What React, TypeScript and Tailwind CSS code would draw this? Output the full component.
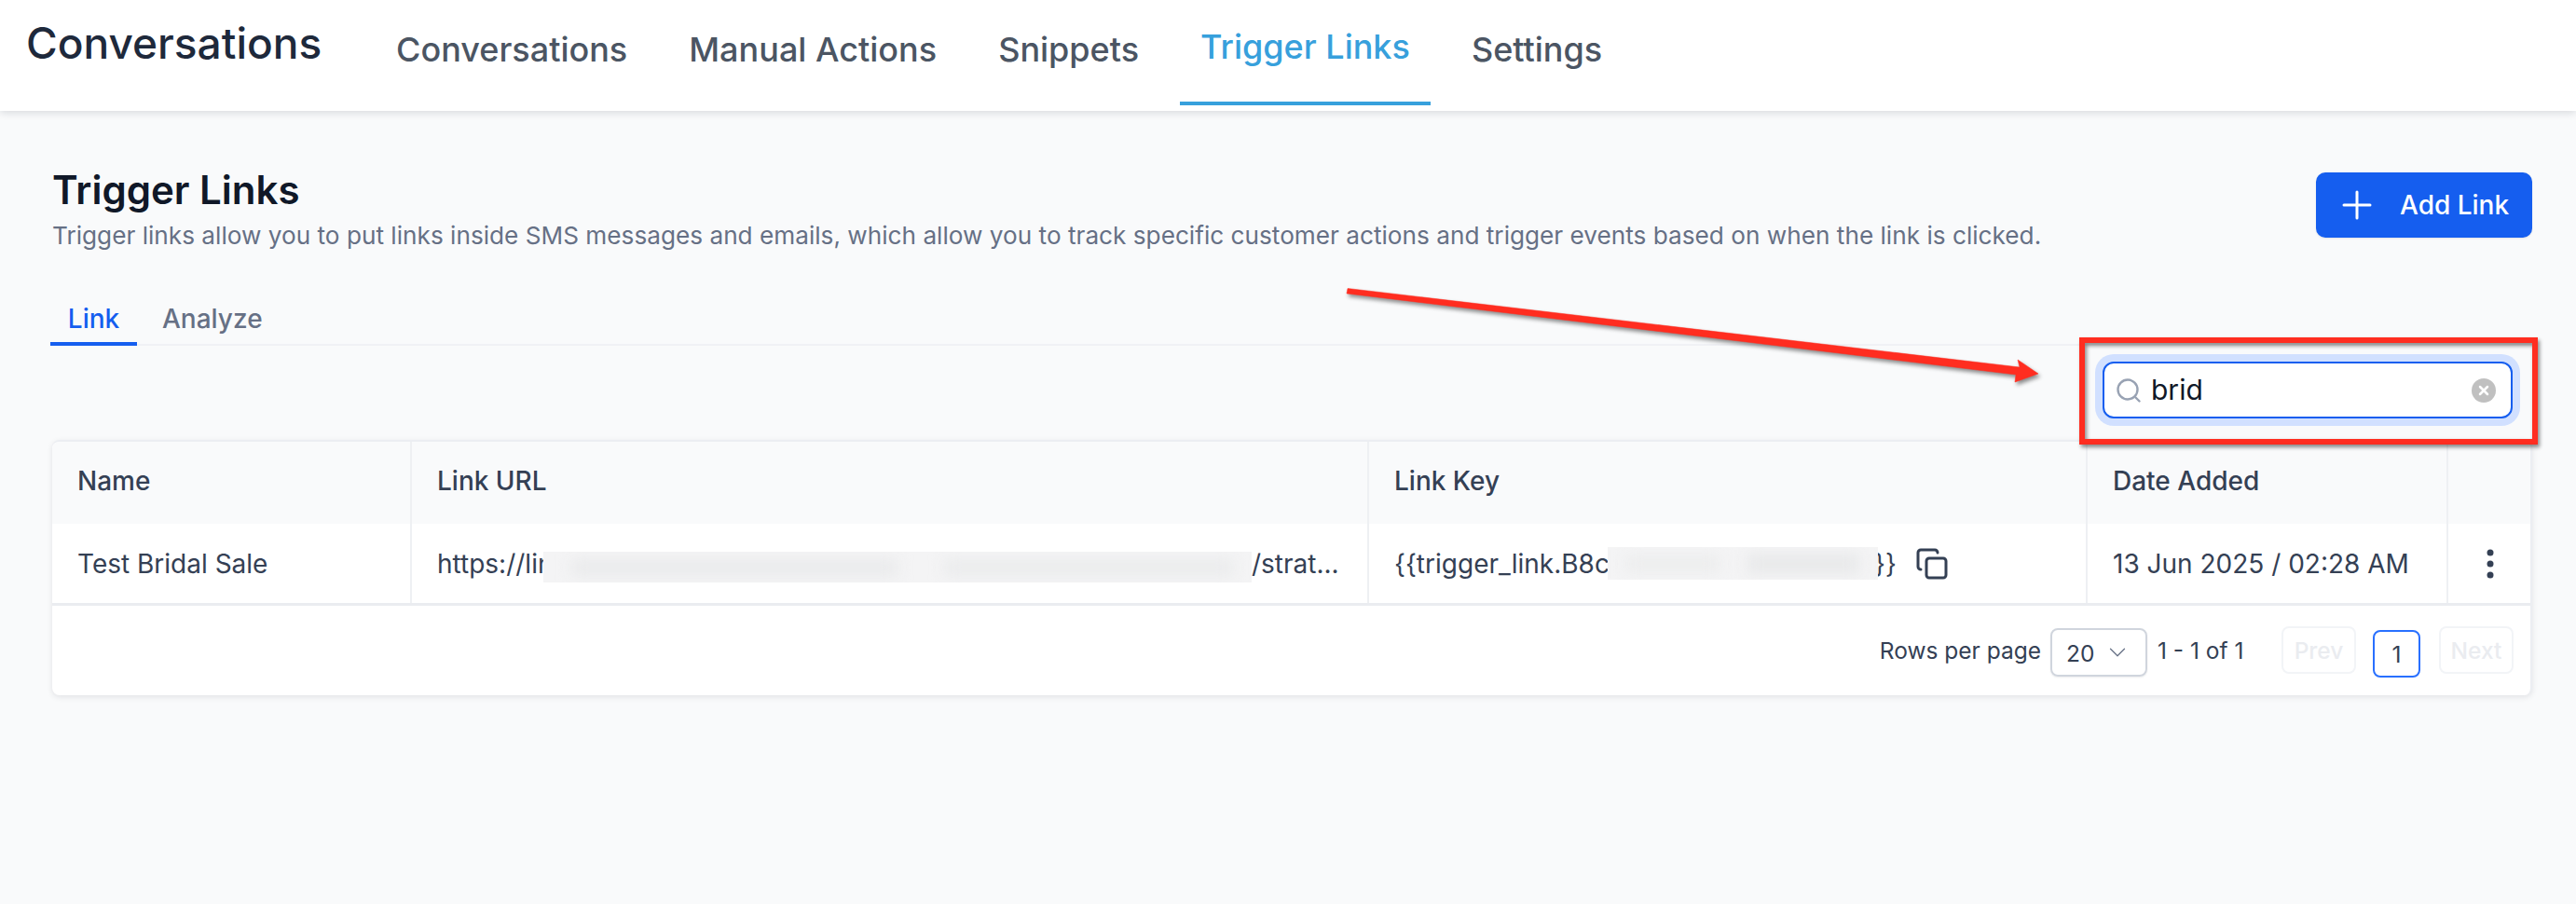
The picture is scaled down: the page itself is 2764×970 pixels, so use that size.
import { Copy, Plus, ChevronDown } from "lucide-react";

const navItems = ["Conversations", "Manual Actions", "Snippets", "Trigger Links", "Settings"];

function TopBar() {
    return (
        <header className="h-[119px] bg-white shadow-[0_2px_8px_rgba(16,24,40,0.14)] flex relative">
            <h1 className="ml-[28px] mt-[21px] w-[375px] pb-[1px] text-[46px] leading-[50px] font-medium text-[#1e293b]">
                Conversations
            </h1>
            <nav className="flex h-[113px] gap-[22px]">
                {navItems.map((item) =>
                    item === "Trigger Links" ? (
                        <a
                            key={item}
                            className="px-[22px] pt-[25px] h-full border-b-4 border-[#37a0dc] text-[36px] leading-[50px] font-medium text-[#37a0dc]"
                        >
                            {item}
                        </a>
                    ) : (
                        <a
                            key={item}
                            className="px-[22px] pt-[28px] h-full text-[36px] leading-[50px] font-medium text-[#4b5563]"
                        >
                            {item}
                        </a>
                    )
                )}
            </nav>
        </header>
    );
}

function Blurred({ className, spots }: { className: string; spots: string[] }) {
    return (
        <span className={`${className} relative bg-[#f4f4f5] overflow-hidden flex items-center shrink-0`}>
            {spots.map((c, i) => (
                <span key={i} className={c} />
            ))}
        </span>
    );
}

function HeaderCell({ label }: { label: string }) {
    return <div className="px-[27px] pb-[4px] flex items-center border-r-2 border-[#eef0f3]">{label}</div>;
}

function LinksTable() {
    return (
        <div className="bg-white rounded-[8px] border-t-2 border-r-2 border-[#eceef2] shadow-[0_2px_6px_rgba(16,24,40,0.1)] text-[28px] leading-[40px] text-[#344054]">
            <div className="grid grid-cols-[386px_1027px_771px_387px_1fr] h-[88px] bg-[#f9fafb] font-medium rounded-t-[8px]">
                <HeaderCell label="Name" />
                <HeaderCell label="Link URL" />
                <HeaderCell label="Link Key" />
                <HeaderCell label="Date Added" />
                <div />
            </div>
            <div className="grid grid-cols-[386px_1027px_771px_387px_1fr] h-[88px] border-b-[3px] border-[#eaecf0]">
                <div className="px-[27px] flex items-center border-r-2 border-[#eef0f3]">Test Bridal Sale</div>
                <div className="pl-[27px] flex items-center border-r-2 border-[#eef0f3] whitespace-nowrap">
                    <span className="w-[114px] shrink-0">https://lin</span>
                    <Blurred
                        className="w-[760px] h-[33px] translate-y-[4px]"
                        spots={[
                            "ml-[30px] w-[350px] h-[16px] shrink-0 bg-[#e8e9ea] blur-[8px]",
                            "ml-[50px] w-[310px] h-[16px] shrink-0 bg-[#e9eaeb] blur-[8px]",
                        ]}
                    />
                    <span>/strat...</span>
                </div>
                <div className="pl-[27px] flex items-center border-r-2 border-[#eef0f3] whitespace-nowrap">
                    <span className="w-[229px] shrink-0">{"{{trigger_link.B8c"}</span>
                    <Blurred
                        className="w-[290px] h-[35px]"
                        spots={[
                            "ml-[20px] w-[100px] h-[16px] shrink-0 bg-[#ebecec] blur-[8px]",
                            "ml-[30px] w-[120px] h-[20px] shrink-0 bg-[#e7e8e9] blur-[8px]",
                        ]}
                    />
                    <span className="-ml-[4px]">{"}}"}</span>
                    <Copy className="ml-[20px] text-[#344054]" size={36} strokeWidth={2} />
                </div>
                <div className="pl-[27px] flex items-center border-r-2 border-[#eef0f3] whitespace-nowrap">
                    13 Jun 2025 / 02:28 AM
                </div>
                <div className="flex items-center justify-center">
                    <svg width="12" height="32" viewBox="0 0 12 32" className="fill-[#344054] ml-[2px]">
                        <circle cx="6" cy="4" r="3.5" />
                        <circle cx="6" cy="16" r="3.5" />
                        <circle cx="6" cy="28" r="3.5" />
                    </svg>
                </div>
            </div>
            <div className="h-[96px] flex justify-end items-start text-[24.5px] leading-[32px] whitespace-nowrap">
                <span className="mt-[32px]">Rows per page</span>
                <div className="mt-[24px] ml-[10px] w-[104px] h-[52px] border-2 border-[#d0d5dd] rounded-[8px] flex items-center pl-[15px] shadow-[0_1px_2px_rgba(16,24,40,0.08)]">
                    <span className="mt-[2px]">20</span>
                    <ChevronDown className="ml-[10px] text-[#667085]" size={30} strokeWidth={1} />
                </div>
                <span className="mt-[32px] ml-[11px] w-[96px]">1 - 1 of 1</span>
                <div className="mt-[22px] ml-[37px] w-[80px] h-[51px] border-2 border-[#f2f4f7] rounded-[8px] flex items-center justify-center font-medium text-[#eaecf0]">
                    Prev
                </div>
                <div className="mt-[26px] ml-[18px] w-[51px] h-[51px] border-2 border-[#2970ff] rounded-[8px] flex items-center justify-center">
                    1
                </div>
                <div className="mt-[22px] ml-[20px] mr-[18px] w-[80px] h-[51px] border-2 border-[#f2f4f7] rounded-[8px] flex items-center justify-center font-medium text-[#eaecf0]">
                    Next
                </div>
            </div>
        </div>
    );
}

function Annotations() {
    return (
        <>
            <svg
                className="absolute left-[1440px] top-[300px] drop-shadow-[2px_3px_2px_rgba(0,0,0,0.45)]"
                width="760"
                height="120"
                viewBox="0 0 760 120"
            >
                <polygon
                    points="6,9.5 727,94 725,86 747,101 722,110 723,102 5,15"
                    fill="#ff2d20"
                    stroke="#ff2d20"
                    strokeWidth="0.5"
                    strokeLinejoin="round"
                />
            </svg>
            <div className="absolute left-[2231px] top-[362px] w-[492px] h-[115px] border-[6px] border-[#ff2d20] shadow-[2px_3px_4px_rgba(0,0,0,0.45),inset_2px_3px_4px_rgba(0,0,0,0.45)]" />
        </>
    );
}

export default function App() {
    return (
        <div className="relative h-[970px] overflow-hidden bg-[#f9fafb] font-['Inter',sans-serif]">
            <TopBar />
            <main className="pl-[56px] pr-[47px]">
                <div className="flex justify-between pt-[60px]">
                    <div>
                        <h2 className="text-[42px] leading-[50px] font-semibold text-[#101828]">Trigger Links</h2>
                        <p className="mt-[5px] text-[26.2px] leading-[38px] text-[#667085]">
                            Trigger links allow you to put links inside SMS messages and emails, which allow you to track
                            specific customer actions and trigger events based on when the link is clicked.
                        </p>
                    </div>
                    <button className="mt-[6px] w-[232px] h-[70px] bg-[#155eef] rounded-[10px] flex items-center pl-[20px] text-[28px] font-medium text-white shadow-[0_1px_2px_rgba(16,24,40,0.1)]">
                        <Plus size={48} strokeWidth={1.5} />
                        <span className="ml-[22px]">Add Link</span>
                    </button>
                </div>
                <div className="flex -ml-[2px] mt-[43px] border-b-2 border-[#f0f1f5] h-[56px] text-[28px] leading-[36px]">
                    <span className="w-[93px] text-center pt-[9px] h-[56px] border-b-4 border-[#155eef] font-medium text-[#155eef]">
                        Link
                    </span>
                    <span className="ml-[27px] pt-[9px] font-medium text-[#667085]">Analyze</span>
                </div>
                <div className="flex justify-end mt-[17px] pr-[21px]">
                    <div className="w-[440px] h-[61px] bg-white border-2 border-[#155eef] rounded-[12px] ring-8 ring-[#d1e0ff] flex items-center pl-[13px] pr-[16px]">
                        <svg width="26" height="26" viewBox="0 0 26 26" fill="none" className="stroke-[#98a2b3]" strokeWidth="2.4" strokeLinecap="round">
                            <circle cx="12" cy="12" r="10.5" />
                            <path d="M20.5 20.5l4 4" />
                        </svg>
                        <span className="ml-[11px] flex-1 text-[30px] text-[#101828]">brid</span>
                        <span className="w-[26px] h-[26px] rounded-full bg-[#c0c0c0] flex items-center justify-center">
                            <svg width="12" height="12" viewBox="0 0 12 12" className="stroke-white" strokeWidth="2.5" strokeLinecap="round">
                                <path d="M2 2l8 8M10 2l-8 8" />
                            </svg>
                        </span>
                    </div>
                </div>
                <div className="mt-[23px]">
                    <LinksTable />
                </div>
            </main>
            <Annotations />
        </div>
    );
}
